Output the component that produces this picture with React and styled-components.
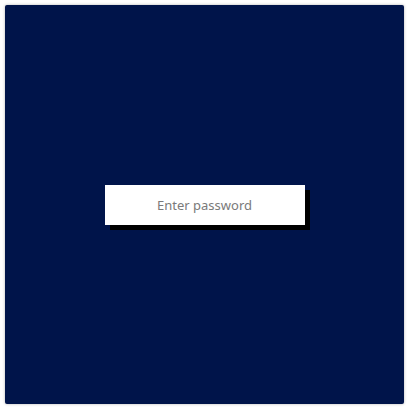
import styled, { createGlobalStyle } from "styled-components";

const GlobalStyle = createGlobalStyle`
  html, body {
    margin: 0;
    padding: 0;
    background: #ffffff;
  }
`;

const Page = styled.div`
  padding: 5px;
  width: 410px;
  height: 410px;
  box-sizing: border-box;
`;

const Panel = styled.div`
  width: 399px;
  height: 399px;
  background-color: #00144a;
  border-radius: 2px;
  box-shadow: 0 0 3px rgba(0, 0, 0, 0.3);
  display: flex;
  align-items: center;
  justify-content: center;
`;

const PasswordInput = styled.input`
  width: 200px;
  height: 40px;
  box-sizing: border-box;
  border: none;
  outline: none;
  background: #ffffff;
  box-shadow: 5px 5px 0 #000000;
  text-align: center;
  font-family: "Noto Sans", "Open Sans", sans-serif;
  font-size: 13px;
  color: #333;
  padding: 0;
  margin: 0 0 0 0;
  &::placeholder {
    color: #7a7a7a;
  }
`;

export default function App() {
  return (
    <>
      <GlobalStyle />
      <Page>
        <Panel>
          <PasswordInput type="password" placeholder="Enter password" />
        </Panel>
      </Page>
    </>
  );
}
